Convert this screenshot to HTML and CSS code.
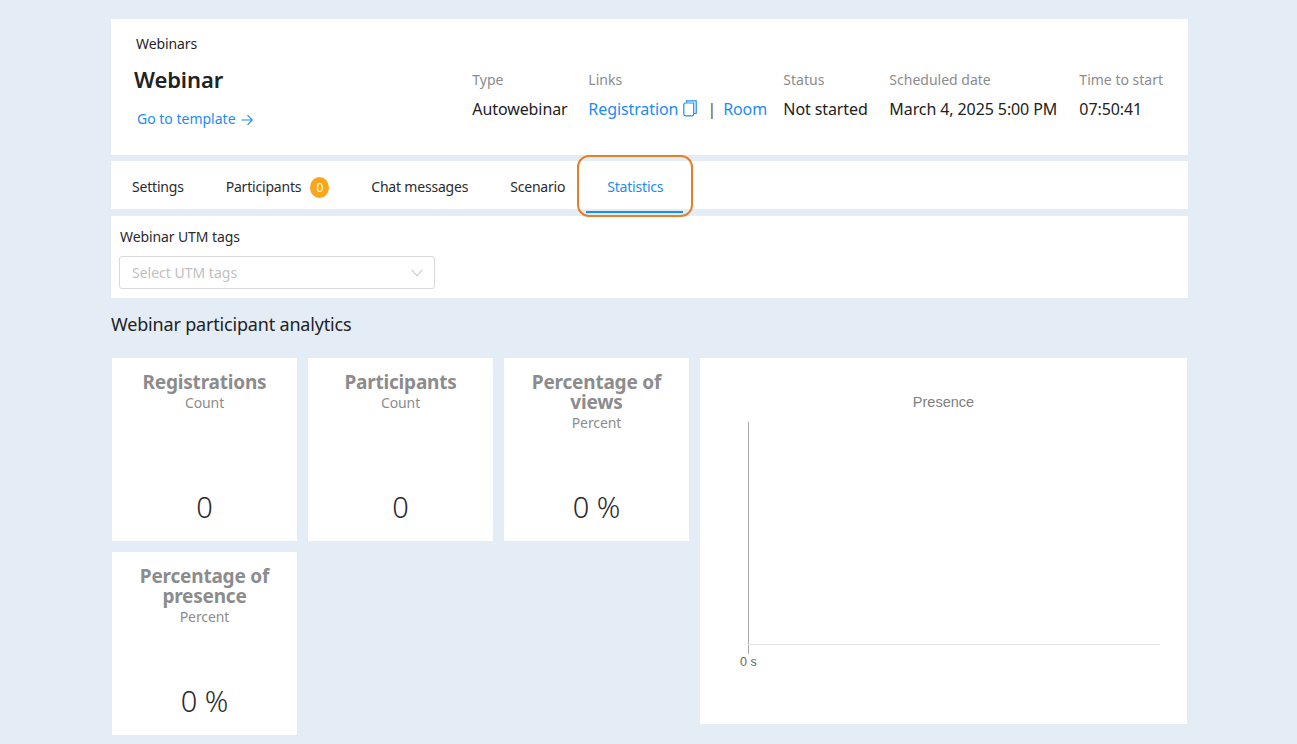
FILE: index.html
```html
<!DOCTYPE html>
<html lang="en">
<head>
<meta charset="utf-8">
<title>Webinar statistics</title>
<link rel="stylesheet" href="styles.css">
</head>
<body>
<main class="page">
  <header class="panel head">
    <div class="crumb">Webinars</div>
    <div class="head-row">
      <div class="head-left">
        <h1 class="title">Webinar</h1>
        <a class="link template">Go to template
          <svg class="arrow" width="12" height="12" viewBox="0 0 12 12"><path d="M0.5 6H11M6.5 1.2L11.2 6L6.5 10.8" fill="none" stroke="currentColor" stroke-width="1.1"/></svg>
        </a>
      </div>
      <dl class="meta">
        <div class="meta-col col-type"><dt>Type</dt><dd>Autowebinar</dd></div>
        <div class="meta-col col-links"><dt>Links</dt><dd><a class="link">Registration</a>
          <svg class="copy" width="14" height="17" viewBox="0 0 14 17"><path d="M3.5 2.5V0.8H13.2V13.5H11" fill="none" stroke="currentColor" stroke-width="1.2"/><path d="M0.8 4.8C0.8 3.6 1.4 3 2.6 3H10.7V14C10.7 15.2 10.1 15.8 8.9 15.8H2.6C1.4 15.8 0.8 15.2 0.8 14Z" fill="none" stroke="currentColor" stroke-width="1.2"/></svg>
          <span class="sep">|</span> <a class="link">Room</a></dd></div>
        <div class="meta-col col-status"><dt>Status</dt><dd>Not started</dd></div>
        <div class="meta-col col-date"><dt>Scheduled date</dt><dd>March 4, 2025 5:00 PM</dd></div>
        <div class="meta-col"><dt>Time to start</dt><dd>07:50:41</dd></div>
      </dl>
    </div>
  </header>

  <nav class="panel tabs">
    <a class="tab">Settings</a>
    <a class="tab">Participants <span class="badge">0</span></a>
    <a class="tab">Chat messages</a>
    <a class="tab">Scenario</a>
    <a class="tab active">Statistics</a>
  </nav>

  <section class="panel utm">
    <div class="utm-label">Webinar UTM tags</div>
    <div class="select">
      <span>Select UTM tags</span>
      <svg width="12" height="8" viewBox="0 0 12 8"><path d="M0.6 0.8L6 6.8L11.4 0.8" fill="none" stroke="#b4b4b4" stroke-width="1"/></svg>
    </div>
  </section>

  <h2 class="section-title">Webinar participant analytics</h2>

  <section class="analytics">
    <div class="cards">
      <article class="card"><h3>Registrations</h3><p class="unit">Count</p><p class="value">0</p></article>
      <article class="card"><h3>Participants</h3><p class="unit">Count</p><p class="value">0</p></article>
      <article class="card"><h3>Percentage of views</h3><p class="unit">Percent</p><p class="value">0 %</p></article>
      <article class="card"><h3>Percentage of presence</h3><p class="unit">Percent</p><p class="value">0 %</p></article>
    </div>
    <figure class="chart">
      <figcaption class="chart-title">Presence</figcaption>
      <div class="plot">
        <div class="axis-y"></div>
        <div class="axis-x"></div>
        <span class="tick">0 s</span>
      </div>
    </figure>
  </section>
</main>
</body>
</html>
```

FILE: styles.css
```css
* { box-sizing: border-box; }
html, body { margin: 0; height: 744px; overflow: hidden; }
body {
  background: #e4ecf6;
  font-family: "Noto Sans", "Open Sans", sans-serif;
  color: #1f1f1f;
}
.page {
  width: 1077px;
  margin-left: 111px;
  padding-top: 19px;
}
.panel { background: #fff; }
a { text-decoration: none; }
.link { color: #1c8cf5; }

.head { height: 136px; padding: 16px 25px 0 23px; }
.crumb { font-size: 14px; line-height: 18px; margin-left: 2px; letter-spacing: -0.1px; }
.head-row { display: flex; justify-content: space-between; }
.title { margin: 11px 0 0; font-size: 22px; line-height: 30px; font-weight: 600; color: #222; letter-spacing: -0.1px; }
.template { display: flex; align-items: center; gap: 5px; margin: 15px 0 0 3px; font-size: 14px; line-height: 20px; }
.arrow { margin-top: 1px; }
.meta { display: flex; margin: 17px 0 0; }
.meta-col { margin: 0; }
.col-type { width: 116px; }
.col-links { width: 195px; }
.col-status { width: 106px; }
.col-date { width: 190px; }
.meta dt { font-size: 14px; line-height: 20px; color: #8c8c8c; }
.meta dd { margin: 8px 0 0; font-size: 16px; line-height: 22px; color: #222; letter-spacing: -0.1px; white-space: nowrap; }
.copy { vertical-align: -2px; margin-left: 1px; }
.sep { color: #7a4a12; margin: 0 3px 0 6px; }
.meta .copy { color: #1c8cf5; }

.tabs { display: flex; height: 48px; margin-top: 6px; padding-left: 21px; }
.tab { position: relative; display: flex; align-items: center; gap: 4px; height: 50px; margin-right: 42px; font-size: 14px; color: #2b2b2b; letter-spacing: -0.2px; white-space: nowrap; }
.badge { display: inline-flex; align-items: center; justify-content: center; width: 19px; height: 21px; margin-left: 5px; margin-top: 2px; border-radius: 50%; background: #faa61a; color: #fff; font-size: 12px; }
.tab.active { color: #1c8cf5; }
.tab.active::before { content: ""; position: absolute; left: -21px; right: -20px; bottom: -2px; height: 2px; background: #1c8cf5; }
.tab.active::after { content: ""; position: absolute; left: -30px; right: -30px; top: -6px; bottom: -6px; border: 2px solid #e5802a; border-radius: 12px; }

.utm { height: 82px; margin-top: 7px; padding: 11px 9px 0; }
.utm-label { font-size: 14px; line-height: 19px; color: #2b2b2b; letter-spacing: -0.1px; }
.select { display: flex; align-items: center; justify-content: space-between; width: 316px; height: 33px; margin-top: 10px; margin-left: -1px; padding: 0 11px 0 12px; border: 1px solid #d9d9d9; border-radius: 3px; font-size: 14px; color: #bfbfbf; }

.section-title { margin: 14px 0 0; font-size: 18px; line-height: 24px; font-weight: 400; color: #222; letter-spacing: -0.18px; }

.analytics { display: flex; gap: 11px; margin-top: 22px; }
.cards { display: grid; grid-template-columns: repeat(3, 185px); grid-auto-rows: 183px; gap: 11px; margin-left: 1px; }
.card { display: flex; flex-direction: column; align-items: center; padding: 14px 8px 15px; background: #fff; text-align: center; }
.card h3 { margin: 0; font-size: 19px; line-height: 20px; font-weight: 700; color: #8c8c8c; letter-spacing: -0.2px; }
.unit { margin: 1px 0 0; font-size: 14px; line-height: 20px; color: #8c8c8c; letter-spacing: -0.1px; }
.value { margin: auto 0 0; font-size: 29px; line-height: 38px; font-weight: 300; color: #2b2b2b; letter-spacing: -0.1px; }

.chart { width: 487px; height: 366px; margin: 0; background: #fff; }
.chart-title { padding-top: 35px; text-align: center; font-family: "Liberation Sans", sans-serif; font-size: 14.5px; line-height: 18px; color: #808080; }
.plot { position: relative; height: 260px; }
.axis-y { position: absolute; left: 48px; top: 11px; width: 1px; height: 232px; background: #a8a8a8; }
.axis-x { position: absolute; left: 48px; top: 233px; width: 412px; height: 1px; background: #e2e2e2; }
.tick { position: absolute; left: 40px; top: 244px; font-family: "Liberation Sans", sans-serif; font-size: 12.5px; line-height: 14px; color: #666; }
```
